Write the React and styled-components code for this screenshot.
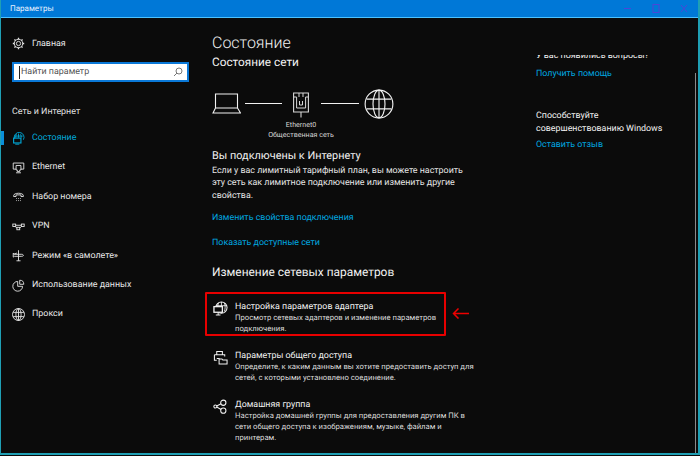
import React from "react";
import styled, { createGlobalStyle } from "styled-components";

const Global = createGlobalStyle`
  html, body {
    margin: 0;
    padding: 0;
    background: #0b0b0b;
  }
  * {
    box-sizing: border-box;
  }
`;

const Window = styled.div`
  position: relative;
  width: 700px;
  height: 455px;
  display: flex;
  flex-direction: column;
  overflow: hidden;
  background: #0b0b0b;
  border: 2px solid #1f9fb4;
  border-top: 0;
  border-left-width: 1px;
  font-family: Roboto, "Noto Sans", sans-serif;
  text-rendering: geometricPrecision;
  color: #f2f2f2;
`;

const TitleBar = styled.div`
  height: 18px;
  flex: none;
  display: flex;
  align-items: center;
  justify-content: space-between;
  margin: 0 -2px 0 -1px;
  padding-left: 10px;
  background: #0078d7;
  border-bottom: 1px solid #4cc2ff;
  font-size: 8px;
  color: #e8f2ff;
`;

const WinButtons = styled.div`
  display: flex;
  align-items: center;
  gap: 20px;
  padding-right: 12px;
  color: #4b46d8;
`;

const Body = styled.div`
  flex: 1;
  display: flex;
  min-height: 0;
`;

const Sidebar = styled.nav`
  width: 203px;
  flex: none;
  padding-top: 11px;
  display: flex;
  flex-direction: column;
`;

const NavItem = styled.div`
  position: relative;
  height: 29.4px;
  display: flex;
  align-items: center;
  gap: 7px;
  padding-left: 11px;
  font-size: 8.9px;
  color: ${(p) => (p.$active ? "#00a8d8" : "#e8e8e8")};

  ${(p) =>
    p.$active &&
    `&::before {
      content: "";
      position: absolute;
      left: 0;
      top: 8px;
      width: 3px;
      height: 14px;
      background: #0a8fd8;
    }`}
`;

const Search = styled.div`
  width: 177px;
  height: 20px;
  margin: 4px 0 0 11px;
  padding: 0 4px 0 5px;
  display: flex;
  align-items: center;
  background: #fff;
  border: 2px solid #0a78d7;
  font-size: 8.9px;
  color: #555;
`;

const Caret = styled.span`
  width: 1px;
  height: 13px;
  margin-right: 1px;
  background: #222;
`;

const SearchIcon = styled.svg`
  margin-left: auto;
`;

const Group = styled.div`
  margin: 22px 0 2px 11px;
  height: 17px;
  line-height: 17px;
  font-size: 8.9px;
  color: #e0e0e0;
`;

const Main = styled.main`
  width: 324px;
  flex: none;
  padding: 0 0 0 8px;
  display: flex;
  flex-direction: column;
`;

const Heading = styled.h1`
  margin: 12px 0 0;
  font-size: 16px;
  line-height: 26px;
  font-weight: 300;
`;

const SubHeading = styled.h2`
  margin: 0;
  font-size: 11.8px;
  line-height: 12px;
  font-weight: 400;
`;

const Diagram = styled.div`
  margin-top: 21px;
  display: flex;
  align-items: flex-start;
`;

const Adapter = styled.div`
  width: 16px;
  margin: 3px 12px 0 11px;
  display: flex;
  flex-direction: column;
  align-items: center;
  font-size: 7.1px;
  line-height: 10px;
  white-space: nowrap;
  color: #d8d8d8;

  svg {
    margin-bottom: 2px;
  }
`;

const Link = styled.div`
  margin-top: ${(p) => p.$top || 0}px;
  font-size: 8.9px;
  line-height: 14px;
  color: #00a8e0;
`;

const Connected = styled.div`
  margin-top: 8px;
  font-size: 10.9px;
  line-height: 16px;
`;

const Para = styled.p`
  margin: 0.75px 0 0;
  font-size: 8.9px;
  line-height: 12.5px;
  color: #e6e6e6;
`;

const SectionTitle = styled.h3`
  margin: 13px 0 0;
  font-size: 11.9px;
  line-height: 18px;
  font-weight: 400;
`;

const Option = styled.div`
  position: relative;
  display: flex;
  gap: 8px;
  margin-top: ${(p) => p.$top}px;
  padding-left: 1px;
`;

const OptionIcon = styled.div`
  width: 14px;
  flex: none;
`;

const OptionTitle = styled.div`
  font-size: 8.9px;
  line-height: 12px;
`;

const OptionText = styled.div`
  font-size: 7.7px;
  line-height: 10.8px;
  color: #dcdcdc;
`;

const Highlight = styled.div`
  position: absolute;
  left: -7px;
  top: -9px;
  width: 241px;
  height: 44px;
  border: 2px solid #e80000;
  border-radius: 1px;
`;

const RedArrow = styled.svg`
  position: absolute;
  left: 240px;
  top: 7px;
`;

const Aside = styled.aside`
  flex: 1;
  padding-left: 8px;
  display: flex;
  flex-direction: column;
`;

const ClippedLine = styled.div`
  height: 6px;
  margin-top: 37px;
  overflow: hidden;
  display: flex;
  align-items: flex-end;
  font-size: 8.9px;
  line-height: 10px;
  white-space: nowrap;
`;

const AsideText = styled.div`
  margin-top: 29px;
  font-size: 8.9px;
  line-height: 12.5px;
`;

const Scrollbar = styled.div`
  position: absolute;
  right: 2px;
  top: 73px;
  width: 1px;
  height: 380px;
  background: #8a8a8a;
`;

const Icon = ({ size = 13, children }) => (
  <svg width={size} height={size} viewBox="0 0 16 16" fill="none" stroke="currentColor" strokeWidth="1.1">
    {children}
  </svg>
);

const GearIcon = () => (
  <Icon>
    <circle cx="8" cy="8" r="2.6" />
    <circle cx="8" cy="8" r="5.2" />
    <path d="M8 1v2M8 13v2M1 8h2M13 8h2M3 3l1.4 1.4M11.6 11.6L13 13M13 3l-1.4 1.4M4.4 11.6L3 13" strokeWidth="1.6" />
  </Icon>
);

const StatusIcon = () => (
  <Icon>
    <path d="M3 8A6 6 0 1 1 14 9.5" />
    <path d="M2.8 5h10.4M8 2v5M5.5 2.8c-.8 1.2-1 2.6-.9 4.2M10.5 2.8c.6 1.2.9 2.6.9 4" />
    <rect x="2" y="7.5" width="9" height="6" strokeWidth="1.4" />
    <path d="M4 15h5" />
  </Icon>
);

const EthernetIcon = () => (
  <Icon>
    <path d="M1.5 2.5h13v7.5H11M5 10H1.5V2.5" />
    <path d="M5 5.5h6v5.5H9.5v2h-3v-2H5z" />
    <path d="M5 14.5h6" />
  </Icon>
);

const DialIcon = () => (
  <Icon>
    <path d="M2 7c0-4 12-4 12 0v1h-3V6H5v2H2z" />
    <path d="M5 10.5h1.2M7.4 10.5h1.2M9.8 10.5H11M5 13h1.2M7.4 13h1.2M9.8 13H11" strokeWidth="1.2" opacity="0.7" />
  </Icon>
);

const VpnIcon = () => (
  <Icon>
    <rect x="1" y="5" width="3.5" height="3" />
    <rect x="11.5" y="5" width="3.5" height="3" />
    <rect x="6" y="9" width="3.5" height="3" />
    <path d="M4.5 6.5h7M6 10L4 8M9.5 10l2-2" />
  </Icon>
);

const PlaneIcon = () => (
  <Icon>
    <path d="M8 1.5v13M5.5 14.5h5M2 6.5l4-1.5M14 8c0-1-1-1.5-2-1.5H3L1.5 5v5L3 9h9c1 0 2-.4 2-1z" />
  </Icon>
);

const DataIcon = () => (
  <Icon>
    <path d="M7 3a6 6 0 1 0 6 6H7z" />
    <path d="M9.5 1.5a5 5 0 0 1 5 5h-5z" />
  </Icon>
);

const GlobeIcon = ({ size = 13, strokeWidth = 1.1 }) => (
  <svg width={size} height={size} viewBox="0 0 16 16" fill="none" stroke="currentColor" strokeWidth={strokeWidth}>
    <circle cx="8" cy="8" r="7.4" />
    <ellipse cx="8" cy="8" rx="3.2" ry="7.4" />
    <path d="M8 .6v14.8M1.4 5.4h13.2M1.4 10.6h13.2" />
  </svg>
);

const LaptopIcon = () => (
  <svg width="29" height="21" viewBox="0 0 29 21" fill="none" stroke="currentColor" strokeWidth="1.1" style={{ marginTop: 4 }}>
    <path d="M3.5 15V1h22v14M1 20l2.5-5h22l3 5z" />
  </svg>
);

const Wire = styled.div`
  width: ${(p) => p.$w}px;
  height: 1px;
  margin: 14px ${(p) => p.$after}px 0 ${(p) => p.$before}px;
  background: #f2f2f2;
`;

const PlugIcon = () => (
  <svg width="16" height="26" viewBox="0 0 16 26" fill="none" stroke="currentColor" strokeWidth="1.1">
    <path d="M.6 1h14.8v19H.6zM8 20v5.5" />
    <path d="M.6 5h3v11h9V5h2.8M6 1v4M10 1v4M6.5 9v4h3V9" strokeWidth="1" />
  </svg>
);

const AdapterIcon = () => (
  <Icon size={15}>
    <circle cx="9" cy="7" r="6" />
    <path d="M9 1v12M3 5h12M5.8 2c-1 3-1 6 0 9M12.2 2c1 3 1 6 0 9" strokeWidth="0.9" />
    <rect x="1" y="6" width="9" height="6" fill="#0b0b0b" strokeWidth="1.4" />
    <path d="M3 15h5M5.5 12.5V15" />
  </Icon>
);

const ShareIcon = () => (
  <Icon size={15}>
    <path d="M4 5V1.5h6V5M1.5 5h11v2M1.5 5v6H4M4 9h3" />
    <path d="M6.5 9.5h3l1 1.2h4.5v4.3h-8.5z" fill="#0b0b0b" />
  </Icon>
);

const HomeGroupIcon = () => (
  <Icon size={15}>
    <circle cx="2.5" cy="8" r="1.6" />
    <circle cx="11" cy="4" r="2.8" />
    <circle cx="11" cy="12.5" r="2.8" />
    <path d="M4 7.4l4.6-2.4M4 8.6l4.6 2.6" />
  </Icon>
);

const nav = [
  { label: "Состояние", icon: <StatusIcon />, active: true },
  { label: "Ethernet", icon: <EthernetIcon /> },
  { label: "Набор номера", icon: <DialIcon /> },
  { label: "VPN", icon: <VpnIcon /> },
  { label: "Режим «в самолете»", icon: <PlaneIcon /> },
  { label: "Использование данных", icon: <DataIcon /> },
  { label: "Прокси", icon: <GlobeIcon /> },
];

export default function App() {
  return (
    <>
      <Global />
      <Window>
        <TitleBar>
          Параметры
          <WinButtons>
            <svg width="8" height="9"><path d="M0 4.5h7" stroke="currentColor" /></svg>
            <svg width="8" height="9"><rect x="1" y="0.5" width="6" height="8" fill="none" stroke="currentColor" /></svg>
            <svg width="8" height="9"><path d="M1 1l6 7M7 1L1 8" stroke="currentColor" /></svg>
          </WinButtons>
        </TitleBar>
        <Body>
          <Sidebar>
            <NavItem>
              <GearIcon />
              Главная
            </NavItem>
            <Search>
              <Caret />
              Найти параметр
              <SearchIcon width="10" height="10" viewBox="0 0 10 10" fill="none" stroke="#777" strokeWidth="1">
                <circle cx="6" cy="4" r="3" />
                <path d="M4 6L1 9" />
              </SearchIcon>
            </Search>
            <Group>Сеть и Интернет</Group>
            {nav.map((item) => (
              <NavItem key={item.label} $active={item.active}>
                {item.icon}
                {item.label}
              </NavItem>
            ))}
          </Sidebar>
          <Main>
            <Heading>Состояние</Heading>
            <SubHeading>Состояние сети</SubHeading>
            <Diagram>
              <LaptopIcon />
              <Wire $w={37} $before={4} $after={0} />
              <Adapter>
                <PlugIcon />
                <span>Ethernet0</span>
                <span>Общественная сеть</span>
              </Adapter>
              <Wire $w={38} $before={0} $after={5} />
              <GlobeIcon size={30} strokeWidth={0.6} />
            </Diagram>
            <Connected>Вы подключены к Интернету</Connected>
            <Para>
              Если у вас лимитный тарифный план, вы можете настроить
              <br />
              эту сеть как лимитное подключение или изменить другие
              <br />
              свойства.
            </Para>
            <Link $top={9}>Изменить свойства подключения</Link>
            <Link $top={11}>Показать доступные сети</Link>
            <SectionTitle>Изменение сетевых параметров</SectionTitle>
            <Option $top={20}>
              <Highlight />
              <RedArrow width="17" height="11" viewBox="0 0 17 11" fill="none" stroke="#ee0000" strokeWidth="1.5">
                <path d="M17 5.5H1.5M6.5 .5l-5 5 5 5" />
              </RedArrow>
              <OptionIcon><AdapterIcon /></OptionIcon>
              <div>
                <OptionTitle>Настройка параметров адаптера</OptionTitle>
                <OptionText>
                  Просмотр сетевых адаптеров и изменение параметров
                  <br />
                  подключения.
                </OptionText>
              </div>
            </Option>
            <Option $top={15}>
              <OptionIcon><ShareIcon /></OptionIcon>
              <div>
                <OptionTitle>Параметры общего доступа</OptionTitle>
                <OptionText>
                  Определите, к каким данным вы хотите предоставить доступ для
                  <br />
                  сетей, с которыми установлено соединение.
                </OptionText>
              </div>
            </Option>
            <Option $top={16}>
              <OptionIcon><HomeGroupIcon /></OptionIcon>
              <div>
                <OptionTitle>Домашняя группа</OptionTitle>
                <OptionText>
                  Настройка домашней группы для предоставления другим ПК в
                  <br />
                  сети общего доступа к изображениям, музыке, файлам и
                  <br />
                  принтерам.
                </OptionText>
              </div>
            </Option>
          </Main>
          <Aside>
            <ClippedLine>У вас появились вопросы?</ClippedLine>
            <Link $top={6}>Получить помощь</Link>
            <AsideText>
              Способствуйте
              <br />
              совершенствованию Windows
            </AsideText>
            <Link $top={3}>Оставить отзыв</Link>
          </Aside>
        </Body>
        <Scrollbar />
      </Window>
    </>
  );
}
